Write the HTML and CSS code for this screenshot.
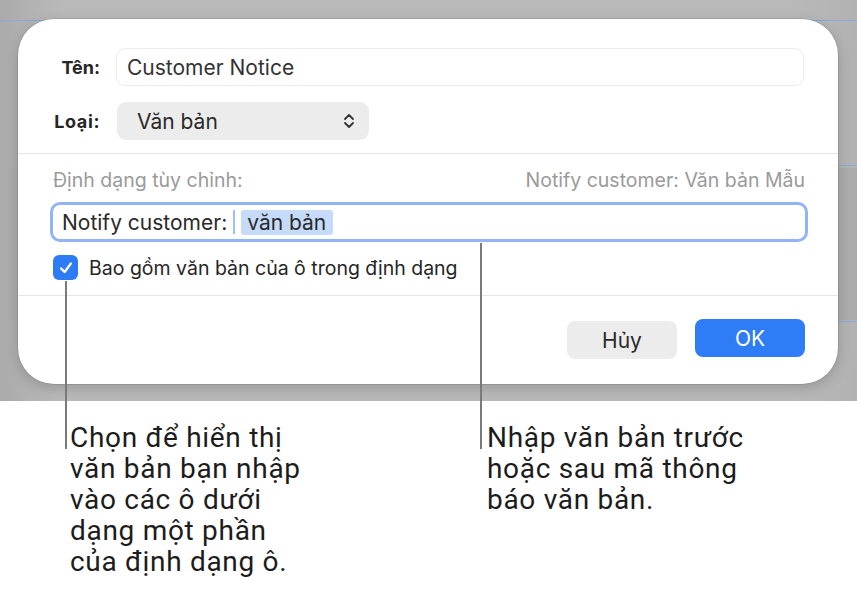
FILE: index.html
```html
<!DOCTYPE html>
<html>
<head>
<meta charset="utf-8">
<link rel="stylesheet" href="styles.css">
</head>
<body>
<div class="page">
  <div class="screen">
    <div class="dialog">
      <div class="top">
        <div class="row">
          <span class="label">Tên:</span>
          <div class="field">Customer Notice</div>
        </div>
        <div class="row row-type">
          <span class="label">Loại:</span>
          <div class="popup">
            <span>Văn bản</span>
            <svg class="chev" width="12" height="18" viewBox="0 0 12 18"><path d="M2 7 L6 3 L10 7 M2 11 L6 15 L10 11" fill="none" stroke="#333" stroke-width="1.8" stroke-linecap="round" stroke-linejoin="round"/></svg>
          </div>
        </div>
      </div>
      <div class="mid">
        <div class="hint">
          <span>Định dạng tùy chỉnh:</span>
          <span>Notify customer: Văn bản Mẫu</span>
        </div>
        <div class="format">
          <span>Notify customer:</span>
          <span class="caret"></span>
          <span class="token">văn bản</span>
        </div>
        <div class="check">
          <span class="box"><svg width="16" height="16" viewBox="0 0 16 16"><path d="M3.2 8.6 L6.6 12 L12.8 3.6" fill="none" stroke="#fff" stroke-width="2.4" stroke-linecap="round" stroke-linejoin="round"/></svg></span>
          <span>Bao gồm văn bản của ô trong định dạng</span>
        </div>
      </div>
      <div class="buttons">
        <div class="btn cancel">Hủy</div>
        <div class="btn ok">OK</div>
      </div>
    </div>
  </div>
  <div class="callouts">
    <p class="note note-left">Chọn để hiển thị<br>văn bản bạn nhập<br>vào các ô dưới<br>dạng một phần<br>của định dạng ô.</p>
    <p class="note note-right">Nhập văn bản trước<br>hoặc sau mã thông<br>báo văn bản.</p>
  </div>
  <span class="line line-left"></span>
  <span class="line line-right"></span>
</div>
</body>
</html>
```
FILE: styles.css
```css
* { box-sizing: border-box; }
html, body { margin: 0; padding: 0; background: #fff; }
body { font-family: "Inter", "Noto Sans", sans-serif; color: #222; }
.page { position: relative; width: 857px; height: 606px; overflow: hidden; }
.screen {
  height: 401px;
  padding: 19px 0 0 18px;
  background:
    linear-gradient(#8aa9dd, #8aa9dd) 0 20px / 100% 1px no-repeat,
    linear-gradient(#8aa9dd, #8aa9dd) right 0 top 165px / 30px 1px no-repeat,
    linear-gradient(#8aa9dd, #8aa9dd) right 0 top 321px / 30px 1px no-repeat,
    linear-gradient(#acacac, #acacac) 0 168px / 100% 152px no-repeat,
    linear-gradient(90deg, #ababab 0, #b9b9b9 60px, #b9b9b9 790px, #b2b2b2 857px);
}
.dialog {
  width: 820px;
  height: 365px;
  background: #fff;
  border-radius: 36px;
  box-shadow: 0 0 0 0.5px rgba(0,0,0,0.15), 0 4px 14px rgba(0,0,0,0.18);
  display: flex;
  flex-direction: column;
}
.top { padding: 29px 34px 0 0; border-bottom: 1px solid #e6e6e6; height: 135px; }
.row { display: flex; align-items: center; height: 38px; }
.row-type { margin-top: 16px; }
.label { width: 98px; text-align: right; padding-right: 16px; font-weight: 700; font-size: 18px; color: #262626; }
.row-type .label { letter-spacing: 0.6px; }
.field {
  flex: 1;
  height: 38px;
  border: 1px solid #ececec;
  border-radius: 9px;
  padding-left: 10px;
  display: flex; align-items: center;
  font-size: 21px; color: #333;
}
.popup {
  width: 252px; height: 38px;
  margin-left: 1px;
  background: #ececec;
  border-radius: 9px;
  display: flex; align-items: center; justify-content: space-between;
  padding: 0 14px 0 20px;
  font-size: 21px; color: #2a2a2a;
}
.mid { padding: 14px 30px 0 32px; border-bottom: 1px solid #e6e6e6; height: 142px; }
.hint { display: flex; justify-content: space-between; font-size: 19.5px; line-height: 24px; color: #9a9a9a; padding: 0 3px 0 3px; }
.format {
  margin-top: 10px;
  height: 40px;
  border: 3.5px solid #92b4f4;
  border-radius: 10px;
  display: flex; align-items: center;
  padding-left: 9px;
  font-size: 21px; color: #2a2a2a;
}
.caret { width: 2px; height: 24px; background: #9fc0f5; margin: 0 6px 0 6px; }
.token { background: #c6dbfa; border-radius: 3px; padding: 0 7px 0 6px; height: 25px; display: flex; align-items: center; }
.check { display: flex; align-items: center; margin-top: 13px; font-size: 19.5px; color: #262626; }
.box {
  width: 25px; height: 25px; margin-left: 3px; margin-right: 11px;
  border-radius: 6px; background: #2e7bf6;
  display: flex; align-items: center; justify-content: center;
}
.buttons { display: flex; justify-content: flex-end; gap: 18px; padding: 23px 33px 0 0; }
.btn { width: 110px; height: 38px; border-radius: 8px; display: flex; align-items: center; justify-content: center; font-size: 21px; }
.cancel { background: #ececec; color: #2a2a2a; margin-top: 2px; }
.ok { background: #2f7df6; color: #fff; }
.callouts { display: flex; padding: 21px 0 0 70px; }
.note { margin: 0; font-family: "Roboto", sans-serif; font-size: 28px; line-height: 31px; color: #1c1c1c; letter-spacing: 0.7px; }
.note-left { width: 417px; }
.line { position: absolute; width: 2px; background: #7a7a7a; }
.line-left { left: 65px; top: 281px; height: 168px; }
.line-right { left: 480px; top: 243px; height: 206px; }
```
